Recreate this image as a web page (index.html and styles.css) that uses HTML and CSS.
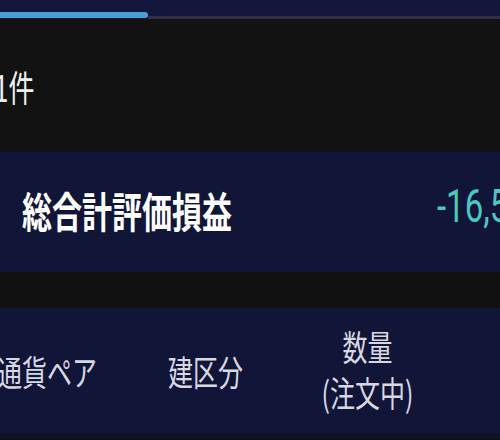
FILE: index.html
```html
<!DOCTYPE html>
<html lang="ja">
<head>
<meta charset="utf-8">
<link rel="stylesheet" href="styles.css">
</head>
<body>
<div class="screen">
  <div class="tabs">
    <div class="tab-active"></div>
    <div class="tab-rest"></div>
  </div>
  <div class="count"><span class="stretch">1件</span></div>
  <div class="summary">
    <div class="summary-title"><span class="stretch">総合計評価損益</span></div>
    <div class="summary-value"><span class="stretch">-16,520円</span></div>
  </div>
  <div class="spacer"></div>
  <div class="table-head">
    <div class="col col-pair"><span class="stretch">通貨ペア</span></div>
    <div class="col col-type"><span class="stretch">建区分</span></div>
    <div class="col col-qty"><span class="stretch">数量<br>(注文中)</span></div>
    <div class="col"></div>
  </div>
  <div class="shadow"></div>
</div>
</body>
</html>
```

FILE: styles.css
```css
html, body {
  margin: 0;
  padding: 0;
  background: #121212;
}
body {
  width: 500px;
  height: 440px;
  overflow: hidden;
  font-family: "Noto Sans CJK JP", "Noto Sans", sans-serif;
}
.screen {
  width: 500px;
  display: flex;
  flex-direction: column;
}
.stretch {
  display: inline-block;
  transform: scaleY(1.4);
  transform-origin: center center;
  white-space: nowrap;
}
.tabs {
  height: 19px;
  box-sizing: border-box;
  padding-top: 12px;
  background: #14153a;
  display: flex;
}
.tab-active {
  width: 148px;
  height: 6px;
  background: #4a9ed2;
  border-radius: 0 3px 3px 0;
}
.tab-rest {
  flex: 1;
  height: 3px;
  align-self: flex-end;
  background: #302e48;
}
.count {
  height: 133px;
  display: flex;
  align-items: center;
  color: #f0f0f0;
  font-size: 26px;
  margin-left: -6px;
}
.summary {
  height: 120px;
  background: #111537;
  display: grid;
  grid-template-columns: 437px 63px;
  align-items: center;
}
.summary-title {
  padding-left: 22px;
  color: #ffffff;
  font-size: 30px;
  font-weight: 700;
  padding-bottom: 4px;
}
.summary-value {
  font-family: Roboto, "Noto Sans", sans-serif;
  font-size: 33px;
  color: #4cc7c2;
  white-space: nowrap;
  padding-bottom: 10px;
}
.spacer {
  height: 36px;
  background: #111111;
}
.table-head {
  height: 125px;
  background: #111537;
  display: grid;
  grid-template-columns: 168px 152px 95px 1fr;
  align-items: center;
  color: #d8d8e2;
  font-size: 25px;
}
.col-pair {
  margin-left: -3px;
}
.col-qty {
  text-align: center;
  line-height: 33px;
  margin-top: -4px;
}
.shadow {
  height: 7px;
  background: linear-gradient(#0f1230, #121212);
}
```
